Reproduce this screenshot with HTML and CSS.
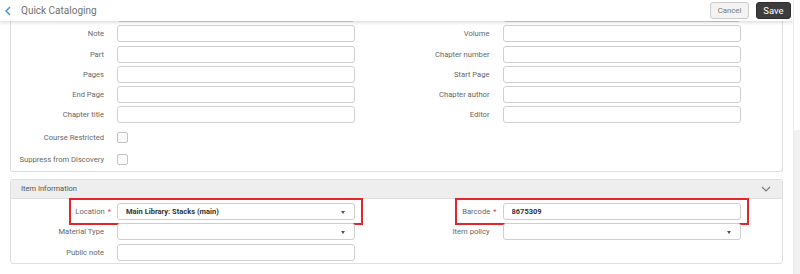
FILE: index.html
```html
<!DOCTYPE html>
<html lang="en">
<head>
  <meta charset="UTF-8">
  <title>Quick Cataloging</title>
  <link rel="stylesheet" href="styles.css">
</head>
<body>
  <div class="app">
    <div class="header">
      <span class="back"><svg width="6" height="10" viewBox="0 0 6 10"><path d="M5 1 L1 5 L5 9" fill="none" stroke="#3a8fd9" stroke-width="1.4"/></svg></span>
      <span class="title">Quick Cataloging</span>
      <div class="actions">
        <button class="btn-cancel">Cancel</button>
        <button class="btn-save">Save</button>
      </div>
    </div>

    <div class="main">
      <div class="card card-top">
        <div class="fields">
          <div class="field"><label></label><input type="text"></div>
          <div class="field"><label></label><input type="text"></div>
          <div class="field"><label>Note</label><input type="text"></div>
          <div class="field"><label>Volume</label><input type="text"></div>
          <div class="field"><label>Part</label><input type="text"></div>
          <div class="field"><label>Chapter number</label><input type="text"></div>
          <div class="field"><label>Pages</label><input type="text"></div>
          <div class="field"><label>Start Page</label><input type="text"></div>
          <div class="field"><label>End Page</label><input type="text"></div>
          <div class="field"><label>Chapter author</label><input type="text"></div>
          <div class="field"><label>Chapter title</label><input type="text"></div>
          <div class="field"><label>Editor</label><input type="text"></div>
        </div>
        <div class="checks">
          <div class="field check"><label>Course Restricted</label><span class="box"></span></div>
          <div class="field check"><label>Suppress from Discovery</label><span class="box"></span></div>
        </div>
      </div>

      <div class="card card-item">
        <div class="card-head">
          <span>Item Information</span>
          <svg width="10" height="6" viewBox="0 0 10 6"><path d="M1 1 L5 5 L9 1" fill="none" stroke="#777" stroke-width="1.1"/></svg>
        </div>
        <div class="fields item-fields">
          <div class="field marked">
            <label>Location<span class="req">*</span></label>
            <div class="select bold">Main Library: Stacks (main)<span class="caret"></span></div>
            <span class="mark"></span>
          </div>
          <div class="field marked">
            <label>Barcode<span class="req">*</span></label>
            <input type="text" class="bold" value="8675309">
            <span class="mark"></span>
          </div>
          <div class="field"><label>Material Type</label><div class="select"><span class="caret"></span></div></div>
          <div class="field"><label>Item policy</label><div class="select"><span class="caret"></span></div></div>
          <div class="field"><label>Public note</label><input type="text"></div>
        </div>
      </div>
    </div>
  </div>
  <div class="scrollbar"><div class="thumb"></div></div>
</body>
</html>
```

FILE: styles.css
```css
body {
  margin: 0;
  padding: 0;
  font-family: Roboto, 'Liberation Sans', sans-serif;
  background: #fff;
  display: flex;
  height: 274px;
  overflow: hidden;
}

.app {
  flex: 1;
  overflow: hidden;
}

.header {
  position: relative;
  z-index: 2;
  height: 21px;
  background: #fff;
  display: flex;
  align-items: center;
  padding: 0 2px 0 5px;
  box-shadow: 0 2px 3px rgba(0, 0, 0, 0.12);
}

.back {
  display: flex;
  width: 16px;
}

.title {
  font-size: 10px;
  color: #727272;
}

.actions {
  margin-left: auto;
  display: flex;
  gap: 7px;
}

.actions button {
  height: 17px;
  border-radius: 3px;
  font-family: Roboto, sans-serif;
  padding: 0;
  cursor: pointer;
}

.btn-cancel {
  width: 39px;
  font-size: 7.8px;
  color: #777;
  background: #f3f3f3;
  border: 1px solid #ccc;
}

.btn-save {
  width: 35px;
  font-size: 9.5px;
  color: #fff;
  background: #3d3d3d;
  border: 1px solid #2e2e2e;
}

.main {
  margin-top: -16px;
  padding: 0 10px;
}

.card {
  border: 1px solid #dedede;
  border-radius: 3px;
  background: #fff;
}

.card-top {
  border-top: none;
  border-radius: 0 0 3px 3px;
}

.fields {
  display: grid;
  grid-template-columns: 1fr 1fr;
  row-gap: 3.25px;
}

.field {
  position: relative;
  display: grid;
  grid-template-columns: 93px 238px;
  column-gap: 13px;
  align-items: center;
}

.field label {
  text-align: right;
  font-size: 7.6px;
  color: #666;
  white-space: nowrap;
}

.field input, .select {
  box-sizing: border-box;
  height: 17px;
  width: 238px;
  border: 1px solid #cfcfcf;
  border-radius: 3px;
  padding: 0 8px;
  font-family: Roboto, sans-serif;
  font-size: 7.5px;
  color: #333;
  background: #fff;
  margin: 0;
}

.select {
  display: flex;
  align-items: center;
  position: relative;
}

.bold {
  font-weight: bold;
}

.caret {
  position: absolute;
  right: 9px;
  top: 7px;
  border-left: 2.5px solid transparent;
  border-right: 2.5px solid transparent;
  border-top: 3px solid #555;
}

.checks {
  margin-top: 3.25px;
}

.check {
  height: 22px;
}

.box {
  width: 9px;
  height: 9px;
  border: 1px solid #c4c4c4;
  border-radius: 2px;
  background: #fafafa;
}

.card-item {
  margin-top: 7px;
  padding-bottom: 2px;
}

.card-head {
  height: 18px;
  background: #eee;
  border-bottom: 1px solid #dedede;
  border-radius: 3px 3px 0 0;
  display: flex;
  align-items: center;
  justify-content: space-between;
  padding: 0 11px 0 10px;
  font-size: 7.5px;
  color: #555;
}

.item-fields {
  padding-top: 4px;
  row-gap: 3.5px;
}

.req {
  color: #e0333a;
  margin-left: 3px;
  margin-right: -7px;
}

.mark {
  position: absolute;
  left: 58px;
  top: -5px;
  width: 290px;
  height: 23px;
  border: 2px solid #e3262e;
}

.scrollbar {
  width: 6px;
  border-left: 1px solid #ececec;
  position: relative;
}

.thumb {
  margin-top: 130px;
  height: 144px;
  background: #f1f1f1;
}
```
